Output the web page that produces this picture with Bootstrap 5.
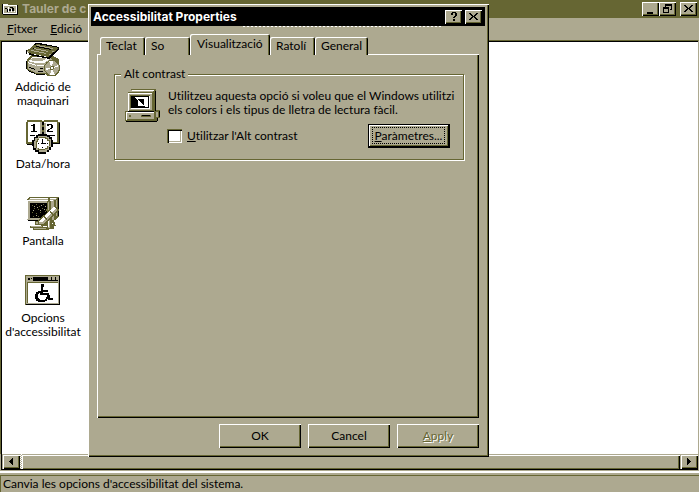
<!DOCTYPE html>
<html lang="ca">
<head>
<meta charset="utf-8">
<meta name="viewport" content="width=device-width, initial-scale=1">
<title>Tauler de control</title>
<link rel="stylesheet" href="https://cdn.jsdelivr.net/npm/bootstrap@5.3.0/dist/css/bootstrap.min.css">
<script src="https://cdn.jsdelivr.net/npm/bootstrap@5.3.0/dist/js/bootstrap.bundle.min.js"></script>
<style>
:root { --face: #ada990; --dark: #666633; }
body { background: var(--face); color: #000; font: 12px/14px Lato, "Liberation Sans", sans-serif; font-variant-ligatures: none; overflow: hidden; }
svg { display: block; shape-rendering: crispEdges; }
.title-main { background: var(--dark); color: var(--face); height: 18px; padding: 0 2px; font-family: Inter, sans-serif; font-weight: 700; }
.title-name { width: 65px; overflow: hidden; white-space: nowrap; }
.title-dialog { background: #000; color: #fff; height: 19px; padding: 0 3px 0 2px; font-family: Inter, sans-serif; font-weight: 700; }
.title-dialog .win-btn + .win-btn { margin-left: 3px; }
.win-btn, .push-btn, .scroll-btn { --bs-btn-padding-x: 0; --bs-btn-padding-y: 0; --bs-btn-border-radius: 0; --bs-btn-color: #000; --bs-btn-font-size: 12px; --bs-btn-line-height: 14px; background: var(--face); border: 0; border-radius: 0; color: #000; }
.win-btn { width: 17px; height: 14px; box-shadow: inset 1px 1px #fff, inset -1px -1px #000, inset -2px -2px var(--dark); }
.menu-main { height: 22px; padding: 0 7px; gap: 13px; }
.menu-main a { color: #000; text-decoration: none; }
.view-pane { background: #fff; border-left: 1px solid var(--dark); border-top: 1px solid var(--dark); border-right: 1px solid var(--face); box-shadow: inset 1px 1px #000; padding: 1px 0 0 1px; }
.icon-col { width: 82px; }
.icon-item { height: 77px; color: #000; text-decoration: none; white-space: nowrap; padding-top: 1px; }
.icon-item svg { margin-bottom: 3px; }
.scroll-row { height: 16px; border-left: 1px solid #000; border-bottom: 1px solid #000; margin: 0 1px; }
.scroll-btn { width: 18px; box-shadow: inset 1px 1px var(--face), inset 2px 2px #fff, inset -1px -1px #000, inset -2px -2px var(--dark); }
.scroll-gap { width: 2px; background: repeating-conic-gradient(#fff 0 25%, var(--face) 0 50%) 0 0 / 2px 2px; }
.scroll-thumb { box-shadow: inset 0 1px var(--face), inset 1px 2px #fff, inset -1px 0 #000, inset -2px -1px var(--dark); }
.status-row { border-top: 2px solid #fff; margin-top: 1px; padding-top: 2px; }
.status-text { border-top: 1px solid var(--dark); border-left: 1px solid var(--dark); height: 17px; padding: 1px 2px 0; }
.dialog-win { left: 88px; top: 4px; width: 401px; background: var(--face); padding: 3px 4px 9px 3px; box-shadow: inset 1px 1px #fff, inset -1px -1px #000, inset -2px -2px var(--dark); }
.trace { height: 1px; margin: 0 44px 0 152px; background: repeating-linear-gradient(90deg, #fff 0 2px, transparent 2px 4px); }
.dialog-body { padding: 7px 6px 0; }
.tab-strip { height: 20px; position: relative; padding-left: 3px; border: 0; flex-wrap: nowrap; }
.tab-strip .nav-link { height: 18px; padding: 0 0 0 6px; border: 0; border-radius: 2px 2px 0 0; color: #000; text-align: left; background: var(--face); box-shadow: inset 1px 1px #fff, inset -1px 0 #000, inset -2px 0 var(--dark); }
.tab-strip .nav-link.active { height: 21px; margin-bottom: -1px; padding-left: 7px; padding-bottom: 1px; background: var(--face); color: #000; }
.tab-a { width: 45px; } .tab-b { width: 80px; } .tab-c { width: 53px; }
.tab-panel { height: 364px; padding: 13px 15px 0 17px; box-shadow: inset 1px 1px #fff, inset -1px -1px #000, inset -2px -2px var(--dark); }
.group-box { border: 1px solid var(--dark); box-shadow: 1px 1px #fff, inset 1px 1px #fff; padding: 0 13px 10px 10px; height: 93px; }
.group-box legend { font-size: 12px; line-height: 14px; background: var(--face); padding: 0 3px; margin-left: -4px; }
.group-main { min-width: 0; }
.group-copy { margin: 0 0 7px; white-space: nowrap; }
.tick-row { gap: 5px; margin-left: -1px; }
.form-check-input.tick { width: 15px; height: 14px; margin: 0; border: 0; border-radius: 0; background-color: #fff; box-shadow: inset 1px 1px var(--dark), inset 2px 2px #000, inset -1px -1px #fff, inset -2px -2px var(--face); }
.push-btn { width: 82px; height: 24px; box-shadow: inset 1px 1px #fff, inset -1px -1px #000, inset -2px -2px var(--dark); }
.push-btn.default { border: 1px solid #000; border-right-width: 2px; border-bottom-width: 2px; padding: 2px 3px; box-shadow: inset 1px 1px #fff, inset -1px -1px var(--dark); }
.push-btn.default span { display: block; border: 1px dotted #000; line-height: 15px; }
.push-btn:disabled { opacity: 1; background: var(--face); color: var(--dark); text-shadow: 1px 1px #fff; }
.action-row { gap: 7px; padding: 6px 0 0; }
</style>
</head>
<body>
<main class="d-flex flex-column vh-100 position-relative">
  <header class="title-main d-flex align-items-center">
    <svg width="16" height="12" viewBox="0 0 16 12" class="me-1"><path fill="#fff" d="M1 1h5v1h9v9H1z"/><path fill="#ada990" d="M2 3h12v7H2z"/><path d="M0 1h1v10H0zM1 11h15v1H1zM15 2h1v9h-1zM3 5h2v1H3zM5 6h1v3H5zM8 4h3v1H8zM10 5h2v3h-2zM7 6h2v2H7z"/><path fill="#fff" d="M6 4h1v5H6zM9 6h1v3H9zM12 8h1v1h-1z"/></svg>
    <span class="title-name me-auto">Tauler de c</span>
    <button class="btn win-btn" aria-label="Minimitza"><svg width="17" height="14"><path d="M5 10h6v2H5z"/></svg></button>
    <button class="btn win-btn me-1" aria-label="Restaura"><svg width="17" height="14"><path d="M6 2h7v6h-2V7h1V4H7v1H6zM4 5h6v6H4zM5 7v3h4V7z" fill-rule="evenodd"/></svg></button>
    <button class="btn win-btn" aria-label="Tanca"><svg width="17" height="14"><path d="M4 3h2v1h1v1h1v1h1V5h1V4h1V3h2v1h-1v1h-1v1h-1v1h1v1h1v1h1v1h-2V9h-1V8H9V7H8v1H7v1H6v1H4V9h1V8h1V7h1V6H6V5H5V4H4z"/></svg></button>
  </header>
  <nav class="menu-main d-flex align-items-center"><a href="#"><u>F</u>itxer</a><a href="#"><u>E</u>dició</a></nav>
  <section class="view-pane flex-grow-1">
    <div class="icon-col d-flex flex-column text-center">
      <a href="#" class="icon-item d-flex flex-column align-items-center">
        <svg width="36" height="34" viewBox="0 0 36 34">
          <path fill="#666633" d="M6 12h20l8 4v13l-4 4h-8l-2-2H10l-8-4V17z"/>
          <path fill="#ada990" d="M3 18l4-4h17l3 3-6 4v9H11l-8-4z"/>
          <path fill="#fff" d="M7 14h14l3 3-5 3h-8l-8-2zM2 19h1l8 3v1l-8-3zM12 22h7v1h-7z"/>
          <path fill="#ada990" d="M8 15h12l1 1-4 2h-7l-6-1z"/>
          <path d="M4 24l6 2v1l-6-2zM13 28h5v1h-5zM15 25h3v1h-3zM1 18h1v8H1zM3 27l7 3v1l-7-3zM11 31h9v1h-9z"/>
          <circle cx="27" cy="25" r="8" fill="#666633"/><circle cx="27" cy="25" r="7" fill="#ada990"/>
          <path fill="#fff" d="M27 25l-3-7h4zM27 25l3 7h-5zM27 25l-6 2v-2zM27 25l6-3v2z"/>
          <circle cx="27" cy="25" r="2" fill="#666633"/><path fill="#fff" d="M26 24h2v2h-2z"/>
          <path fill="#666633" d="M10 0h4l20 4v2l-10 9-20-4-3-3V7l3-1z"/>
          <path d="M10 0h4l20 4v1l-4-1-18-3-3 1zM1 7h1v4H1zM4 10l19 4 11-9v2L24 16 4 12zM11 3l15 3v1L11 4zM8 5l15 3v1L8 6z"/>
          <path fill="#ada990" d="M12 2l16 3v1L12 3zM9 5l14 3v1L9 6zM6 7l15 3v1L6 8zM27 8h2v1h-2zM24 11h2v1h-2zM2 8h2v1H2z"/>
          <path fill="#fff" d="M14 12h2v1h-2zM19 13h2v1h-2zM9 11h2v1H9z"/>
        </svg>
        <span>Addició de<br>maquinari</span></a>
      <a href="#" class="icon-item d-flex flex-column align-items-center">
        <svg width="36" height="34" viewBox="0 0 36 34"><path fill="#666633" d="M2 0h15v1h2V0h14v2h2v22h-9v5H9v-5H1V2h1z"/><path fill="#fff" d="M3 2h14v20H3zM19 2h13v20H19z"/><path fill="#ada990" d="M15 2h2v18h-2zM19 3h2v16h-2z"/><path d="M17 2h2v3h-2zM17 7h2v3h-2zM17 12h2v3h-2zM8 4h2v7h2v1H6v-1h2V6H6V5h2zM22 4h5v1h1v3h-1v1h-2v1h-1v1h4v1h-6v-2h1V9h2V8h1V5h-2v1h-2zM34 3h1v21h-9v-1h8zM2 24h9v1H2zM5 15h5v1H5zM25 15h5v1h-5z"/><path d="M13 14h9v1h3v2h2v3h1v7h-2v3h-2v2h-3v2h-8v-2h-3v-2H8v-4H7v-6h2v-3h2v-2h2z"/><path fill="#ada990" d="M13 16h9v1h2v2h2v8h-2v3h-2v2h-8v-2h-3v-2H9v-7h1v-3h3z"/><path fill="#666633" d="M14 17h7v1h2v2h2v6h-2v3h-3v1h-7v-2h-2v-7h1v-2h2z"/><path fill="#fff" d="M14 18h6v1h2v2h2v5h-2v2h-2v1h-6v-1h-2v-6h1v-2h1z"/><path d="M17 19h1v4h3v1h-5v-1h1zM13 23h1v1h-1zM22 23h1v1h-1zM17 27h1v1h-1z"/></svg>
        <span>Data/hora</span></a>
      <a href="#" class="icon-item d-flex flex-column align-items-center">
        <svg width="36" height="34" viewBox="0 0 36 34">
          <path fill="#666633" d="M4 0h30v19l-3 4H2V3z"/>
          <path fill="#ada990" d="M5 1h27l-2 2H3zM2 3h27v20H2zM31 3h1v16h-1z"/>
          <path fill="#fff" d="M2 3h26v1H3v18H2zM5 1h26v1H5z"/>
          <path d="M5 6h21v15H5zM33 1h1v18h-1zM3 23h14v1H3z"/>
          <path fill="#666633" d="M7 8h1v1H7zM11 7h1v1h-1zM14 9h1v1h-1zM18 7h1v1h-1zM9 11h1v1H9zM13 12h1v1h-1zM17 11h1v1h-1zM20 14h1v1h-1zM7 15h1v1H7zM11 16h1v1h-1zM15 15h1v1h-1zM8 19h1v1H8zM13 19h1v1h-1zM18 18h1v1h-1z"/>
          <path fill="#ada990" d="M9 9h1v1H9zM16 8h1v1h-1zM12 10h1v1h-1zM20 9h1v1h-1zM15 13h1v1h-1zM8 13h1v1H8zM11 18h1v1h-1zM19 12h1v1h-1z"/>
          <path fill="#666633" d="M10 24h16v3h3v5h-5v1H8v-2H5v-2h5z"/>
          <path fill="#ada990" d="M11 25h10v2H11zM6 29h11v1H6zM9 31h12v1H9z"/><path fill="#fff" d="M6 28h10v1H6zM18 29h5v1h-5z"/>
          <path fill="#666633" d="M22 4h1V1h2v3h1v8h1v19h-5V14h-1v-2h1z"/><path fill="#ada990" d="M23 5h1v8h-1zM23 22h2v9h-2z"/><path fill="#fff" d="M23 15h1v15h-1z"/>
          <path fill="#666633" d="M30 9l4 4-15 15h-6v-5z"/><path fill="#ada990" d="M29 10l4 3-15 14h-4v-3z"/><path fill="#fff" d="M29 10l2 2-14 13h-3v-1z"/><path fill="#666633" d="M25 14l3 3-1 1-3-3zM19 19l3 3-1 1-3-3z"/>
          <path fill="#666633" d="M27 23h2l2 6h-3z"/>
        </svg>
        <span>Pantalla</span></a>
      <a href="#" class="icon-item d-flex flex-column align-items-center">
        <svg width="36" height="34" viewBox="0 0 36 34"><path fill="#666633" d="M0 1h35v30H0z"/><path fill="#ada990" d="M1 2h33v28H1z"/><path d="M2 3h31v4H2zM34 2h1v29H1v-1h33z"/><path fill="#ada990" d="M2 3h6v4H2zM23 3h3v3h-3zM27 3h3v3h-3zM31 3h2v3h-2z"/><path d="M3 4h2v2H3zM6 4h1v1H6z"/><path fill="#666633" d="M2 8h31v21H2z"/><path fill="#fff" d="M3 9h30v20H3z"/><path d="M16 10h3v3h-1v3h5v2h-5v1h6v2h1v3h3v2h-5v-3h-1v-2h-7v-4h1v-5zM13 17h2v2h-1v1h-1v4h1v1h1v1h5v-1h1v-2h2v2h-1v2h-2v1h-7v-1h-2v-2h-1v-5h1v-2h1z"/></svg>
        <span>Opcions<br>d'accessibilitat</span></a>
    </div>
  </section>
  <div class="scroll-row d-flex">
    <button class="btn scroll-btn" aria-label="Esquerra"><svg width="18" height="15"><path d="M10 4h1v7h-1v-1H9V9H8V8H7V7h1V6h1V5h1z"/></svg></button>
    <div class="scroll-gap"></div><div class="scroll-thumb flex-grow-1"></div>
    <button class="btn scroll-btn" aria-label="Dreta"><svg width="18" height="15"><path d="M7 4h1v1h1v1h1v1h1v1h-1v1H9v1H8v1H7z"/></svg></button>
  </div>
  <footer class="status-row"><div class="status-text">Canvia les opcions d'accessibilitat del sistema.</div></footer>

  <section class="dialog-win position-absolute" role="dialog" aria-labelledby="dialog-title">
    <div class="title-dialog d-flex align-items-center">
      <span id="dialog-title" class="me-auto">Accessibilitat Properties</span>
      <button class="btn win-btn" aria-label="Ajuda"><svg width="17" height="14"><path d="M6 3h1V2h4v1h1v3h-1v1h-1v1H8V7h1V6h1V3H8v2H6zM8 9h2v2H8z"/></svg></button>
      <button class="btn win-btn" aria-label="Tanca"><svg width="17" height="14"><path d="M4 3h2v1h1v1h1v1h1V5h1V4h1V3h2v1h-1v1h-1v1h-1v1h1v1h1v1h1v1h-2V9h-1V8H9V7H8v1H7v1H6v1H4V9h1V8h1V7h1V6H6V5H5V4H4z"/></svg></button>
    </div>
    <div class="trace"></div>
    <div class="dialog-body">
      <div class="nav nav-tabs tab-strip align-items-end" role="tablist">
        <button class="nav-link tab-a" role="tab">Teclat</button>
        <button class="nav-link tab-a" role="tab">So</button>
        <button class="nav-link active tab-b" role="tab" aria-selected="true">Visualització</button>
        <button class="nav-link tab-a" role="tab">Ratolí</button>
        <button class="nav-link tab-c" role="tab">General</button>
      </div>
      <div class="tab-panel" role="tabpanel">
        <fieldset class="group-box">
          <legend class="float-none w-auto mb-2">Alt contrast</legend>
          <div class="d-flex gap-2">
            <svg width="35" height="34" viewBox="0 0 35 34" class="flex-shrink-0"><path fill="#666633" d="M6 0h25v21h4v8h-3v3H0V22h3V3h3z"/><path fill="#ada990" d="M6 1h22v2H5zM4 4h23v17H4zM2 23h27v7H2zM31 23h2v5h-2z"/><path fill="#fff" d="M3 4h24v1H4v17H3zM1 23h28v1H2v7H1zM7 1h22v1H7z"/><path d="M30 2h1v20h-1zM3 22h26v1H3zM1 32h31v1H1zM32 29h1v3h-1zM34 22h1v6h-1z"/><path fill="#666633" d="M5 6h20v1H6v12H5zM28 5h2v16h-2zM29 24h2v7h-2z"/><path fill="#fff" d="M6 19h19v1H6zM24 7h1v12h-1z"/><path d="M6 7h18v12H6z"/><path fill="#fff" d="M10 8h13v10h-3v-1h-1v-7h-6v1h-1v-1h-1V9h-1z"/><path fill="#fff" d="M13 11h1v1h1v1h1v1h1v1h1v1h1v1h-6z"/><path fill="#666633" d="M4 26h2v2H4zM16 26h10v2H16z"/><path d="M17 26h8v1h-8z"/></svg>
            <div class="group-main flex-grow-1">
              <p class="group-copy">Utilitzeu aquesta opció si voleu que el Windows utilitzi<br>els colors i els tipus de lletra de lectura fàcil.</p>
              <div class="d-flex">
                <div class="tick-row d-flex me-auto align-items-center">
                  <input class="form-check-input tick" type="checkbox" id="contrast"><label for="contrast"><u>U</u>tilitzar l'Alt contrast</label>
                </div>
                <button class="btn push-btn default"><span><u>P</u>aràmetres...</span></button>
              </div>
            </div>
          </div>
        </fieldset>
      </div>
      <div class="action-row d-flex justify-content-end">
        <button class="btn push-btn">OK</button><button class="btn push-btn">Cancel</button><button class="btn push-btn" disabled><u>A</u>pply</button>
      </div>
    </div>
  </section>
</main>
</body>
</html>
